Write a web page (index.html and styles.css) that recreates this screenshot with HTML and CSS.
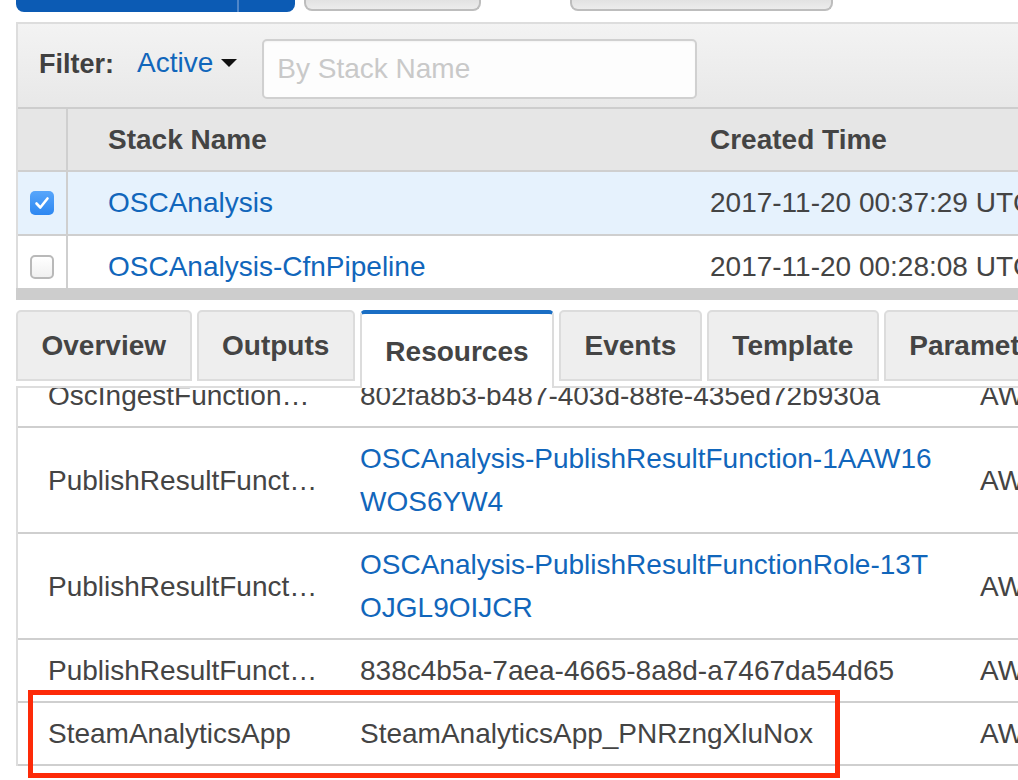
FILE: index.html
```html
<!DOCTYPE html>
<html lang="en">
<head>
<meta charset="utf-8">
<title>CloudFormation Stacks</title>
<link rel="stylesheet" href="styles.css">
</head>
<body>
<div class="page">
  <div class="actions">
    <div class="btn-primary"><span class="btn-main"></span><span class="btn-caret"></span></div>
    <div class="btn-secondary btn-actions"></div>
    <div class="btn-secondary btn-design"></div>
  </div>

  <div class="stacks">
    <div class="filter">
      <span class="filter-label">Filter:</span>
      <span class="filter-select">Active<span class="caret"></span></span>
      <input class="filter-input" type="text" placeholder="By Stack Name">
    </div>
    <div class="stack-table-wrap">
      <table class="stack-table">
        <colgroup><col class="c-check"><col class="c-name"><col class="c-time"></colgroup>
        <thead>
          <tr><th></th><th>Stack Name</th><th>Created Time</th></tr>
        </thead>
        <tbody>
          <tr class="selected">
            <td><span class="checkbox checked"><svg viewBox="0 0 24 24" width="24" height="24"><path d="M6.5 12.5l3.8 4 7.2-9" fill="none" stroke="#fff" stroke-width="2.6" stroke-linecap="round" stroke-linejoin="round"/></svg></span></td>
            <td><a class="link" href="#">OSCAnalysis</a></td>
            <td>2017-11-20 00:37:29 UTC+0000</td>
          </tr>
          <tr>
            <td><span class="checkbox"></span></td>
            <td><a class="link" href="#">OSCAnalysis-CfnPipeline</a></td>
            <td>2017-11-20 00:28:08 UTC+0000</td>
          </tr>
        </tbody>
      </table>
    </div>
  </div>

  <div class="splitter"></div>

  <div class="tabs">
    <div class="tab">Overview</div>
    <div class="tab">Outputs</div>
    <div class="tab active">Resources</div>
    <div class="tab">Events</div>
    <div class="tab">Template</div>
    <div class="tab">Parameters</div>
  </div>

  <div class="resources-wrap">
    <table class="resources">
      <colgroup><col class="r-logical"><col class="r-physical"><col class="r-type"></colgroup>
      <tbody>
        <tr>
          <td class="logical">OscIngestFunction…</td>
          <td>802fa8b3-b487-403d-88fe-435ed72b930a</td>
          <td>AWS::Lambda::Permission</td>
        </tr>
        <tr>
          <td class="logical">PublishResultFunct…</td>
          <td class="physical"><a class="link" href="#">OSCAnalysis-PublishResultFunction-1AAW16WOS6YW4</a></td>
          <td>AWS::Lambda::Function</td>
        </tr>
        <tr>
          <td class="logical">PublishResultFunct…</td>
          <td class="physical"><a class="link" href="#">OSCAnalysis-PublishResultFunctionRole-13TOJGL9OIJCR</a></td>
          <td>AWS::IAM::Role</td>
        </tr>
        <tr>
          <td class="logical">PublishResultFunct…</td>
          <td>838c4b5a-7aea-4665-8a8d-a7467da54d65</td>
          <td>AWS::Lambda::Permission</td>
        </tr>
        <tr>
          <td class="logical">SteamAnalyticsApp</td>
          <td>SteamAnalyticsApp_PNRzngXluNox</td>
          <td>AWS::KinesisAnalytics::Application</td>
        </tr>
      </tbody>
    </table>
  </div>

  <div class="highlight"></div>
</div>
</body>
</html>
```

FILE: styles.css
```css
html, body {
  margin: 0;
  padding: 0;
  overflow: hidden;
  background: #fff;
}

body {
  font-family: "Liberation Sans", Arial, Helvetica, sans-serif;
  color: #444;
  width: 1018px;
  height: 780px;
}

.page {
  position: relative;
  width: 1018px;
  height: 780px;
}

/* top action buttons (cut off by the top edge) */
.actions {
  display: flex;
  height: 12px;
  padding-left: 16px;
}

.btn-primary {
  display: flex;
  width: 279px;
  height: 12px;
  background: #0c5bb4;
  border-radius: 0 0 8px 8px;
  overflow: hidden;
}

.btn-main {
  width: 221px;
}

.btn-caret {
  flex: 1;
  border-left: 2px solid #4f86c9;
}

.btn-secondary {
  height: 11px;
  box-sizing: border-box;
  background: linear-gradient(#e2e2e2, #ececec);
  border: 2px solid #bdbdbd;
  border-top: none;
  border-radius: 0 0 8px 8px;
}

.btn-actions {
  width: 177px;
  margin-left: 9px;
}

.btn-design {
  width: 263px;
  margin-left: 89px;
}

/* stacks panel */
.stacks {
  margin: 10px 0 0 16px;
  border-left: 2px solid #ddd;
  border-top: 2px solid #ddd;
}

.filter {
  display: flex;
  align-items: flex-start;
  height: 83px;
  box-sizing: border-box;
  padding: 15px 0 0 21px;
  background: linear-gradient(#f3f3f3, #e8e8e8);
}

.filter-label {
  font-size: 27px;
  font-weight: bold;
  line-height: 50px;
  color: #404040;
}

.filter-select {
  margin-left: 23px;
  font-size: 28px;
  line-height: 48px;
  color: #1166bb;
  white-space: nowrap;
}

.caret {
  display: inline-block;
  width: 0;
  height: 0;
  margin-left: 8px;
  vertical-align: 5px;
  border-left: 8px solid transparent;
  border-right: 8px solid transparent;
  border-top: 8px solid #111;
}

.filter-input {
  width: 435px;
  height: 60px;
  box-sizing: border-box;
  margin: 0 0 0 25px;
  padding: 0 13px;
  border: 2px solid #d0d0d0;
  border-radius: 5px;
  background: #fdfdfd;
  box-shadow: inset 0 1px 2px rgba(0, 0, 0, 0.04);
  font-family: "Liberation Sans", Arial, sans-serif;
  font-size: 28px;
  color: #444;
}

.filter-input::placeholder {
  color: #c9c9c9;
}

.stack-table-wrap {
  height: 179px;
  overflow: hidden;
  border-top: 2px solid #cdcdcd;
}

.stack-table {
  border-collapse: separate;
  border-spacing: 0;
  table-layout: fixed;
  width: 1100px;
  font-size: 28px;
}

.c-check { width: 50px; }
.c-name { width: 602px; }
.c-time { width: 448px; }

.stack-table th,
.stack-table td {
  padding: 0 0 0 40px;
  text-align: left;
  vertical-align: middle;
  white-space: nowrap;
  border-bottom: 2px solid #cfcfcf;
}

.stack-table th {
  height: 61px;
  line-height: 61px;
  background: #e6e6e6;
  font-weight: bold;
  color: #444;
}

.stack-table td {
  height: 62px;
  line-height: 62px;
  color: #444;
}

.stack-table th:first-child,
.stack-table td:first-child {
  padding: 0;
  border-right: 2px solid #cfcfcf;
}

.stack-table tr.selected td {
  background: #e6f2fd;
}

.checkbox {
  display: block;
  width: 24px;
  height: 24px;
  box-sizing: border-box;
  margin: 0 0 0 12px;
  border: 2px solid #b9b9b9;
  border-radius: 5px;
  background: linear-gradient(#fff, #f0f0f0);
}

.checkbox svg {
  display: block;
  margin: -2px;
}

.checkbox.checked {
  border: none;
  background: linear-gradient(#58a6fb, #2d87f1);
}

.checkbox.checked svg {
  margin: 0;
}

.link {
  color: #1166bb;
  text-decoration: none;
}

.splitter {
  height: 12px;
  margin-left: 16px;
  background: #cdcdcd;
}

/* tabs */
.tabs {
  display: flex;
  align-items: flex-start;
  gap: 5px;
  height: 76px;
  margin: 10px 0 0 16px;
}

.tab {
  flex-shrink: 0;
  display: flex;
  align-items: center;
  height: 71px;
  box-sizing: border-box;
  padding: 0 23.5px;
  border: 2px solid #dcdcdc;
  border-radius: 5px 5px 0 0;
  background: #eee;
  font-size: 28px;
  font-weight: bold;
  color: #444;
  white-space: nowrap;
}

.tab.active {
  position: relative;
  z-index: 1;
  height: 78px;
  border-top: 4px solid #1a6ec4;
  border-bottom: none;
  background: #fff;
  padding-top: 2px;
}

/* resources table */
.resources-wrap {
  margin-left: 16px;
  border-left: 2px solid #ddd;
  border-top: 2px solid #ddd;
  overflow: hidden;
}

.resources {
  margin-top: -23px;
  border-collapse: separate;
  border-spacing: 0;
  table-layout: fixed;
  width: 1150px;
  font-size: 28px;
}

.r-logical { width: 312px; }
.r-physical { width: 610px; }
.r-type { width: 228px; }

.resources td {
  padding: 9px 0 9px 30px;
  line-height: 43px;
  vertical-align: middle;
  text-align: left;
  border-bottom: 2px solid #cfcfcf;
  color: #444;
  white-space: nowrap;
  overflow: hidden;
}

.resources td:nth-child(3) {
  padding-left: 40px;
}

.resources td.physical {
  white-space: normal;
  word-break: break-all;
}

/* annotation */
.highlight {
  position: absolute;
  left: 28px;
  top: 690px;
  width: 812px;
  height: 88px;
  box-sizing: border-box;
  border: 5px solid #fd2a08;
}
```
